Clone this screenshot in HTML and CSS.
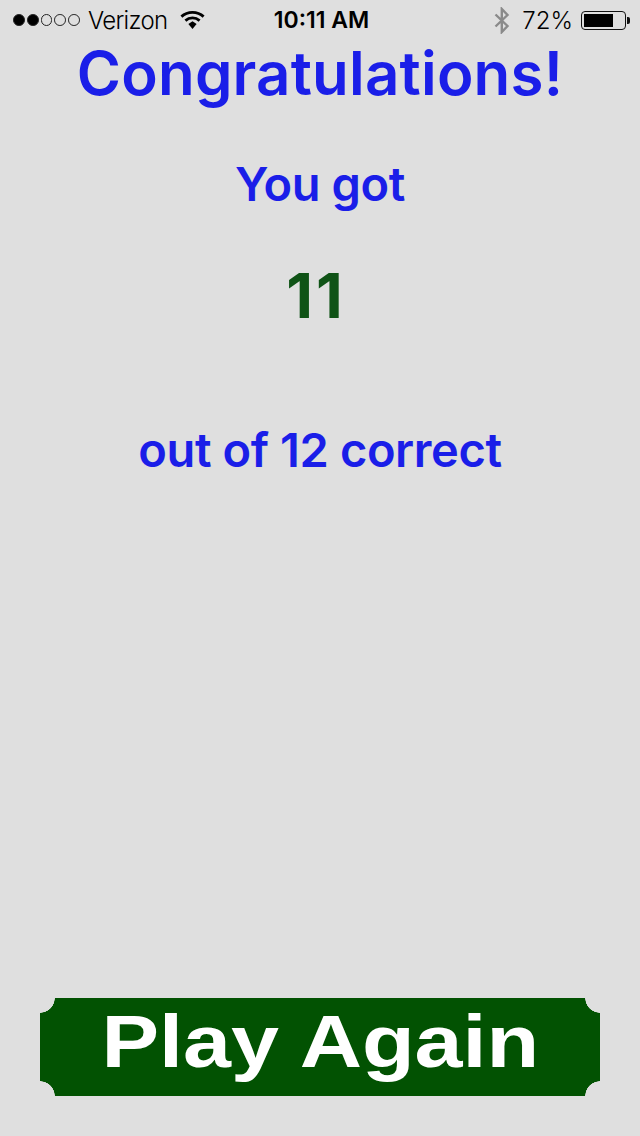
FILE: index.html
```html
<!DOCTYPE html>
<html lang="en">
<head>
<meta charset="utf-8">
<title>Results</title>
<link rel="stylesheet" href="styles.css">
</head>
<body>
<div class="screen">
  <header class="status">
    <div class="status-left">
      <span class="signal"><i class="dot on"></i><i class="dot on"></i><i class="dot"></i><i class="dot"></i><i class="dot"></i></span>
      <span class="carrier">Verizon</span>
      <svg class="wifi" width="25" height="20" viewBox="0 0 25 20"><path d="M1.4 6.6C7.6 .9 17.4 .9 23.6 6.6" fill="none" stroke="#000" stroke-width="2.8"/><path d="M5.4 10.6C9.6 7 15.4 7 19.6 10.6" fill="none" stroke="#000" stroke-width="2.8"/><path d="M8.4 14L12.5 11.2 16.6 14 12.5 19z" fill="#000"/></svg>
    </div>
    <div class="status-time">10:11 AM</div>
    <div class="status-right">
      <svg class="bt" width="18" height="27" viewBox="0 0 18 27"><path d="M2.5 7.5L14.5 19 8.8 25V2L14.5 8 2.5 19.5" fill="none" stroke="#8a8a8a" stroke-width="2.4"/></svg>
      <span class="pct">72<span class="pct-sign">%</span></span>
      <span class="battery"><span class="battery-fill"></span></span><span class="battery-cap"></span>
    </div>
  </header>
  <main class="results">
    <h1 class="title">Congratulations!</h1>
    <p class="line got">You got</p>
    <p class="score">11</p>
    <p class="line total">out of 12 correct</p>
  </main>
  <button class="play" type="button"><span class="play-label">Play Again</span></button>
</div>
</body>
</html>
```
FILE: styles.css
```css
* { box-sizing: border-box; }
html, body { margin: 0; padding: 0; }
body { background: #dfdfdf; font-family: Inter, "Liberation Sans", Arial, sans-serif; }
.screen { width: 640px; height: 1136px; display: flex; flex-direction: column; overflow: hidden; background: #dfdfdf; }

.status { height: 40px; display: grid; grid-template-columns: 1fr auto 1fr; align-items: center; padding: 0 10px 0 13px; color: #000; font-size: 24px; font-weight: 300; flex: none; }
.status-left { display: flex; align-items: center; }
.signal { display: flex; gap: 2px; margin-right: 8px; }
.dot { width: 11.8px; height: 11.8px; border-radius: 50%; border: 1px solid #222; display: block; }
.dot.on { background: #000; }
.carrier { margin-right: 13px; letter-spacing: -.7px; }
.wifi { display: block; }
.status-time { font-weight: 600; font-size: 23px; text-align: center; }
.status-right { display: flex; align-items: center; justify-content: flex-end; }
.bt { margin-right: 11px; }
.pct { margin-right: 8px; }
.battery { width: 45px; height: 19px; border: 1.5px solid #111; border-radius: 4px; padding: 2px; display: block; }
.battery-fill { display: block; width: 29px; height: 100%; background: #000; }
.battery-cap { width: 3px; height: 7px; background: #111; margin-left: 1px; border-radius: 0 2px 2px 0; }

.results { flex: 1; display: flex; flex-direction: column; align-items: center; color: #1a1ee8; }
.title { margin: 0; font-size: 60px; line-height: 66px; font-weight: 600; letter-spacing: .2px; }
.line { margin: 0; font-size: 47px; line-height: 52px; font-weight: 600; letter-spacing: -.4px; }
.got { margin-top: 52px; }
.score { margin: 52px 0 0; font-size: 62px; line-height: 68px; font-weight: 700; color: #0f5316; letter-spacing: 3px; padding-right: 8px; }
.total { margin-top: 94px; }

.play {
  flex: none; align-self: center; width: 560px; height: 98px; margin: 0 0 40px; padding: 0 0 13px; border: 0;
  font-family: "Liberation Sans", Arial, sans-serif; color: #fff; display: flex; align-items: center; justify-content: center;
  background:
    radial-gradient(circle at 0 0, #dfdfdf 14.5px, transparent 15px),
    radial-gradient(circle at 100% 0, #dfdfdf 14.5px, transparent 15px),
    radial-gradient(circle at 0 100%, #dfdfdf 14.5px, transparent 15px),
    radial-gradient(circle at 100% 100%, #dfdfdf 14.5px, transparent 15px),
    #025202;
}
.play-label { font-size: 75px; line-height: 80px; font-weight: bold; transform: scaleX(1.15); white-space: nowrap; }
```
